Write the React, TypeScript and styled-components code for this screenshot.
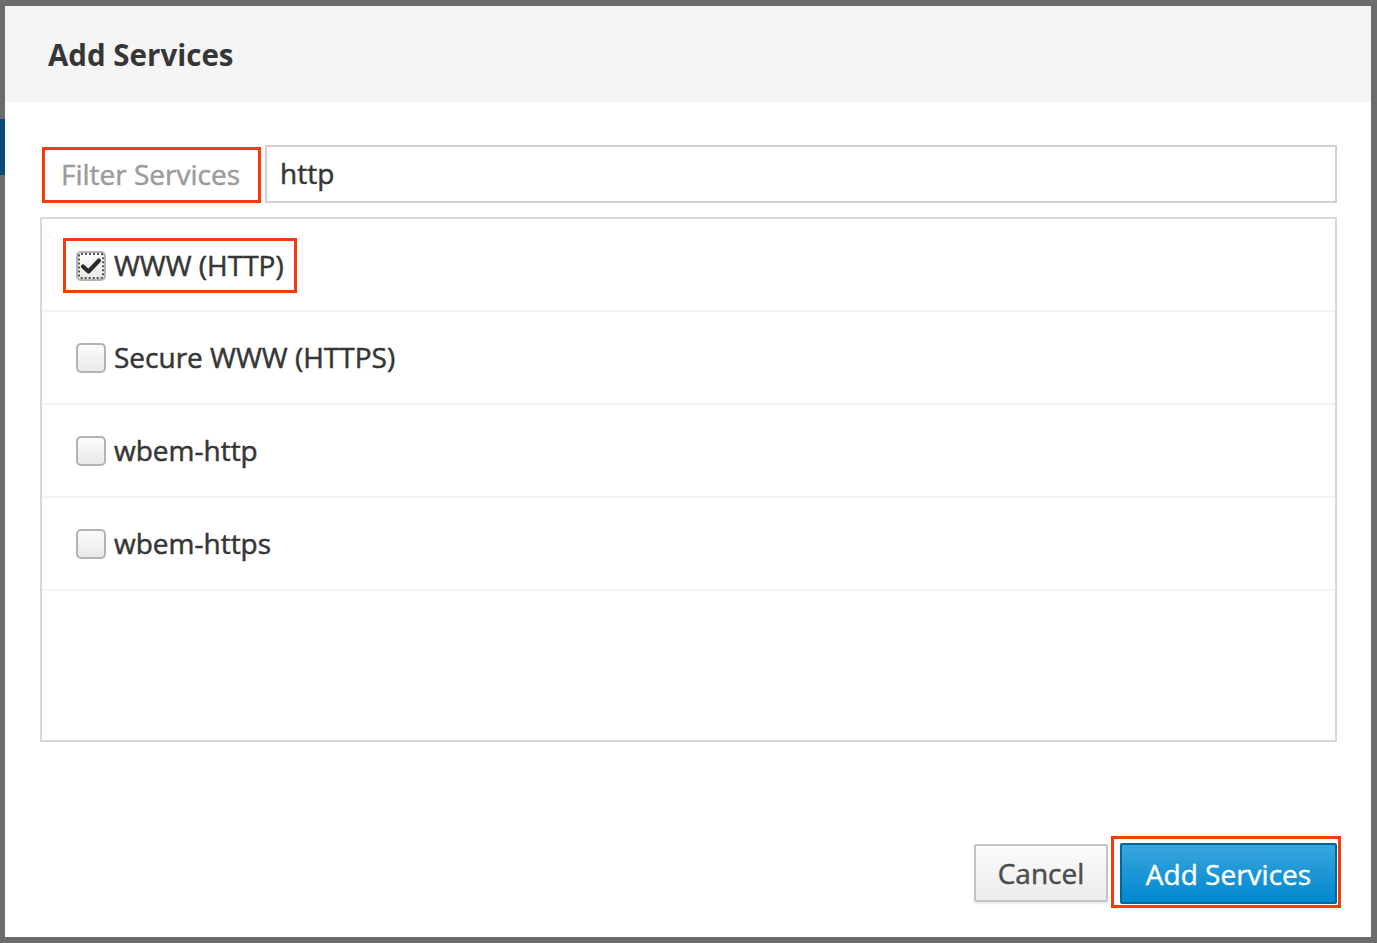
import React from "react";
import styled, {createGlobalStyle} from "styled-components";

const GlobalStyle = createGlobalStyle`
  html, body {
    margin: 0;
    padding: 0;
    background: #6c6c6c;
  }
  * { box-sizing: border-box; }
`

const services = [
    {name: "WWW (HTTP)", checked: true},
    {name: "Secure WWW (HTTPS)", checked: false},
    {name: "wbem-http", checked: false},
    {name: "wbem-https", checked: false},
]

const CheckMark = () =>
    <svg width="22" height="18" viewBox="0 0 22 18">
        <path d="M3 9.5 L8.5 14.5 L19 3.5" fill="none" stroke="#2b2b2b" strokeWidth="4.2"
              strokeLinecap="round" strokeLinejoin="round"/>
    </svg>

export default function App() {
    return (
        <Screen>
            <GlobalStyle/>
            <PageEdge/>
            <Dialog>
                <Header>
                    <Title>Add Services</Title>
                </Header>
                <Body>
                    <FilterRow>
                        <FilterLabel>Filter Services</FilterLabel>
                        <FilterInput defaultValue="http"/>
                    </FilterRow>
                    <List>
                        {services.map((s, i) =>
                            <Row key={s.name}>
                                {i === 0
                                    ? <Highlight>
                                        <Check checked><CheckMark/></Check>
                                        <Label>{s.name}</Label>
                                    </Highlight>
                                    : <Plain>
                                        <Check checked={false}/>
                                        <Label>{s.name}</Label>
                                    </Plain>}
                            </Row>)}
                    </List>
                </Body>
                <Footer>
                    <CancelButton>Cancel</CancelButton>
                    <ButtonHighlight>
                        <PrimaryButton>Add Services</PrimaryButton>
                    </ButtonHighlight>
                </Footer>
            </Dialog>
        </Screen>
    )
}

const Screen = styled.div`
  position: relative;
  width: 1377px;
  height: 943px;
  padding: 6px 6px 6px 5px;
  display: flex;
  font-family: "Open Sans", "Noto Sans", sans-serif;
`
const PageEdge = styled.div`
  position: absolute;
  left: 0;
  top: 119px;
  width: 5px;
  height: 56px;
  background: #0b4a72;
`
const Dialog = styled.div`
  flex: 1;
  display: flex;
  flex-direction: column;
  background: #fff;
`
const Header = styled.div`
  height: 96px;
  background: #f5f5f5;
  display: flex;
  align-items: center;
  padding-left: 43px;
`
const Title = styled.h1`
  margin: 0;
  font-size: 29.5px;
  font-weight: 700;
  color: #363636;
`
const Body = styled.div`
  padding: 43px 34px 0 35px;
`
const FilterRow = styled.div`
  display: flex;
  align-items: center;
  gap: 4px;
`
const FilterLabel = styled.div`
  width: 219px;
  height: 56px;
  margin-left: 2px;
  margin-top: 2px;
  border: 3px solid #f43c0b;
  display: flex;
  align-items: center;
  padding-left: 16px;
  padding-bottom: 2px;
  font-size: 28px;
  color: #9c9c9c;
  -webkit-text-stroke: 0.5px currentColor;
  white-space: nowrap;
`
const FilterInput = styled.input`
  flex: 1;
  height: 58px;
  border: 2px solid #d1d1d1;
  padding: 0 13px 2px;
  font-family: "Open Sans", "Noto Sans", sans-serif;
  font-size: 28px;
  color: #363636;
  -webkit-text-stroke: 0.5px currentColor;
  outline: none;
`
const List = styled.div`
  margin-top: 14px;
  height: 525px;
  border: 2px solid #d8d8d8;
  display: flex;
  flex-direction: column;
`
const Row = styled.div`
  height: 93px;
  border-bottom: 2px solid #f4f4f4;
  display: flex;
  align-items: center;
  padding-left: 21px;
`
const Highlight = styled.div`
  display: flex;
  align-items: center;
  gap: 8px;
  height: 55px;
  width: 234px;
  border: 3px solid #f43c0b;
  padding-left: 10px;
  margin-top: 2px;
`
const Plain = styled.div`
  display: flex;
  align-items: center;
  gap: 8px;
  padding-left: 13px;
`
const Check = styled.span<{ checked: boolean }>`
  flex: none;
  width: 30px;
  height: 30px;
  border-radius: 5px;
  border: 2px solid #b3b3b3;
  background: linear-gradient(#fbfbfb, #e9e9e9);
  display: flex;
  align-items: center;
  justify-content: center;
  outline: ${p => p.checked ? "2px dotted #555" : "none"};
  outline-offset: -4px;
`
const Label = styled.span`
  font-size: 28px;
  color: #363636;
  -webkit-text-stroke: 0.5px currentColor;
  white-space: nowrap;
  padding-bottom: 2px;
`
const Footer = styled.div`
  margin-top: auto;
  display: flex;
  justify-content: flex-end;
  align-items: center;
  gap: 3px;
  padding: 0 30px 29px 0;
`
const CancelButton = styled.button`
  width: 134px;
  height: 58px;
  margin-top: 1px;
  border: 2px solid #c4c4c4;
  border-radius: 2px;
  background: linear-gradient(#fbfbfb, #ececec);
  box-shadow: 0 2px 2px rgba(0, 0, 0, 0.08);
  font-family: "Open Sans", "Noto Sans", sans-serif;
  font-size: 28px;
  color: #4d4d4d;
  -webkit-text-stroke: 0.5px currentColor;
`
const ButtonHighlight = styled.div`
  border: 3px solid #f43c0b;
  padding: 4px 1px 1px 6px;
`
const PrimaryButton = styled.button`
  width: 217px;
  height: 61px;
  border: 2px solid #00659c;
  border-radius: 2px;
  background: linear-gradient(#39a5dc, #0088ce);
  font-family: "Open Sans", "Noto Sans", sans-serif;
  font-size: 28px;
  color: #fff;
  -webkit-text-stroke: 0.4px currentColor;
`
